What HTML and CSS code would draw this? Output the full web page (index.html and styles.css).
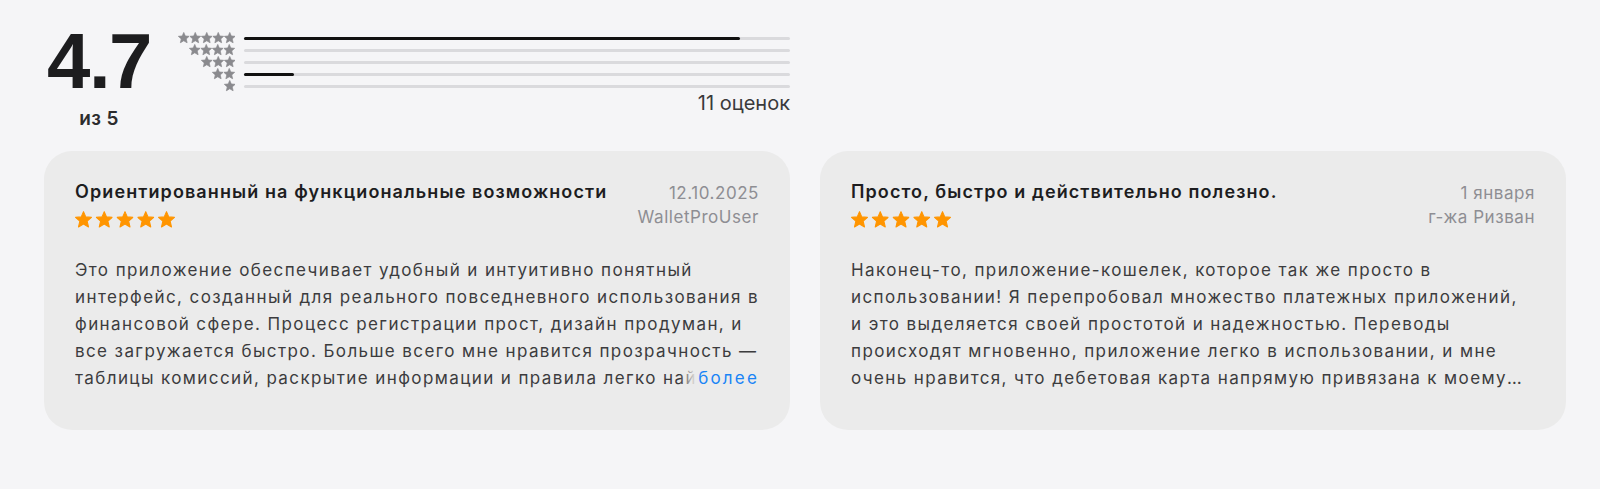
FILE: index.html
```html
<!DOCTYPE html>
<html lang="ru">
<head>
  <meta charset="UTF-8" />
  <title>Оценки и отзывы</title>
  <link rel="stylesheet" href="styles.css">
</head>
<body>
  <svg class="defs" width="0" height="0" aria-hidden="true">
    <symbol id="star" viewBox="0 0 16 16">
      <path d="M8 0.6 L10.15 5.55 L15.5 6.0 L11.45 9.6 L12.7 15.0 L8 12.2 L3.3 15.0 L4.55 9.6 L0.5 6.0 L5.85 5.55 Z" stroke-linejoin="round" stroke-width="1" />
    </symbol>
  </svg>

  <div class="summary">
    <div class="score">
      <span class="score-value">4.7</span>
      <span class="score-max">из 5</span>
    </div>

    <div class="histogram">
      <div class="hist-row">
        <svg class="hist-stars" width="57.5" height="11.5" viewBox="0 0 80 16">
          <use href="#star" x="0" width="16" height="16" /><use href="#star" x="16" width="16" height="16" /><use href="#star" x="32" width="16" height="16" /><use href="#star" x="48" width="16" height="16" /><use href="#star" x="64" width="16" height="16" />
        </svg>
        <div class="bar"><div class="bar-fill" style="width: 90.9%"></div></div>
      </div>
      <div class="hist-row">
        <svg class="hist-stars" width="46" height="11.5" viewBox="0 0 64 16">
          <use href="#star" x="0" width="16" height="16" /><use href="#star" x="16" width="16" height="16" /><use href="#star" x="32" width="16" height="16" /><use href="#star" x="48" width="16" height="16" />
        </svg>
        <div class="bar"><div class="bar-fill" style="width: 0%"></div></div>
      </div>
      <div class="hist-row">
        <svg class="hist-stars" width="34.5" height="11.5" viewBox="0 0 48 16">
          <use href="#star" x="0" width="16" height="16" /><use href="#star" x="16" width="16" height="16" /><use href="#star" x="32" width="16" height="16" />
        </svg>
        <div class="bar"><div class="bar-fill" style="width: 0%"></div></div>
      </div>
      <div class="hist-row">
        <svg class="hist-stars" width="23" height="11.5" viewBox="0 0 32 16">
          <use href="#star" x="0" width="16" height="16" /><use href="#star" x="16" width="16" height="16" />
        </svg>
        <div class="bar"><div class="bar-fill" style="width: 9.1%"></div></div>
      </div>
      <div class="hist-row">
        <svg class="hist-stars" width="11.5" height="11.5" viewBox="0 0 16 16">
          <use href="#star" x="0" width="16" height="16" />
        </svg>
        <div class="bar"><div class="bar-fill" style="width: 0%"></div></div>
      </div>
      <div class="hist-count">11 оценок</div>
    </div>
  </div>

  <div class="reviews">
    <div class="review">
      <div class="review-head">
        <div class="review-main">
          <div class="review-title">Ориентированный на функциональные возможности</div>
          <svg class="review-stars" width="100" height="17" viewBox="0 0 100 17">
            <use href="#star" x="0" width="17" height="17" /><use href="#star" x="20.75" width="17" height="17" /><use href="#star" x="41.5" width="17" height="17" /><use href="#star" x="62.25" width="17" height="17" /><use href="#star" x="83" width="17" height="17" />
          </svg>
        </div>
        <div class="review-meta">
          <div>12.10.2025</div>
          <div>WalletProUser</div>
        </div>
      </div>
      <div class="review-body">
        <p class="review-text">Это приложение обеспечивает удобный и интуитивно понятный интерфейс, созданный для реального повседневного использования в финансовой сфере. Процесс регистрации прост, дизайн продуман, и все загружается быстро. Больше всего мне нравится прозрачность — таблицы комиссий, раскрытие информации и правила легко найти и понять, поэтому я всегда знаю, за что плачу.</p>
        <a class="more" href="#">более</a>
      </div>
    </div>

    <div class="review">
      <div class="review-head">
        <div class="review-main">
          <div class="review-title">Просто, быстро и действительно полезно.</div>
          <svg class="review-stars" width="100" height="17" viewBox="0 0 100 17">
            <use href="#star" x="0" width="17" height="17" /><use href="#star" x="20.75" width="17" height="17" /><use href="#star" x="41.5" width="17" height="17" /><use href="#star" x="62.25" width="17" height="17" /><use href="#star" x="83" width="17" height="17" />
          </svg>
        </div>
        <div class="review-meta">
          <div>1 января</div>
          <div>г-жа Ризван</div>
        </div>
      </div>
      <div class="review-body">
        <p class="review-text">Наконец-то, приложение-кошелек, которое так же просто в использовании! Я перепробовал множество платежных приложений, и это выделяется своей простотой и надежностью. Переводы происходят мгновенно, приложение легко в использовании, и мне очень нравится, что дебетовая карта напрямую привязана к моему банковскому счету.</p>
      </div>
    </div>
  </div>
</body>
</html>
```

FILE: styles.css
```css
body {
  margin: 0;
  padding: 22px 34px 0 44px;
  background-color: #f5f5f7;
  font-family: Inter, "Noto Sans", sans-serif;
  color: #1d1d1f;
}

.defs {
  position: absolute;
}

.summary {
  display: flex;
  align-items: flex-start;
  width: 746px;
}

.score {
  width: 110px;
  display: flex;
  flex-direction: column;
  align-items: center;
}

.score-value {
  font-family: "Liberation Sans", Arial, sans-serif;
  font-weight: 700;
  font-size: 78px;
  line-height: 78px;
  letter-spacing: -1.5px;
}

.score-max {
  margin-top: 8px;
  font-size: 19px;
  font-weight: 600;
  line-height: 22px;
  letter-spacing: 0.3px;
  color: #2c2c2e;
}

.histogram {
  flex: 1;
  margin-left: 23px;
  margin-top: 10px;
}

.hist-row {
  display: flex;
  align-items: center;
  justify-content: flex-end;
  height: 12px;
}

.hist-stars {
  fill: #8a8a8e;
  stroke: #8a8a8e;
}

.bar {
  width: 546px;
  margin-left: 9px;
  height: 3px;
  background-color: #dadadd;
  border-radius: 2px;
}

.bar-fill {
  height: 100%;
  background-color: #111;
  border-radius: 2px;
}

.hist-count {
  text-align: right;
  font-size: 20px;
  line-height: 22px;
  color: #3a3a3c;
}

.reviews {
  display: grid;
  grid-template-columns: 1fr 1fr;
  gap: 30px;
  margin-top: 21px;
}

.review {
  background-color: #ebebeb;
  border-radius: 28px;
  padding: 30px 31px 38px;
}

.review-head {
  display: flex;
  justify-content: space-between;
  align-items: flex-start;
}

.review-title {
  font-size: 18px;
  font-weight: 600;
  line-height: 22px;
  letter-spacing: 1.1px;
}

.review-stars {
  display: block;
  margin-top: 8px;
  fill: #ff9500;
  stroke: #ff9500;
}

.review-meta {
  text-align: right;
  font-size: 17px;
  line-height: 24px;
  letter-spacing: 0.55px;
  color: #8e8e93;
}

.review-body {
  position: relative;
  margin-top: 28px;
}

.review-text {
  margin: 0;
  font-size: 17px;
  line-height: 27px;
  letter-spacing: 1.4px;
  color: #3c3c3e;
  display: -webkit-box;
  -webkit-line-clamp: 5;
  -webkit-box-orient: vertical;
  overflow: hidden;
}

.more {
  position: absolute;
  right: 0;
  bottom: 0;
  padding-left: 18px;
  font-size: 17px;
  line-height: 27px;
  letter-spacing: 2.2px;
  color: #1a84f6;
  text-decoration: none;
  background: linear-gradient(to right, rgba(235, 235, 235, 0), #ebebeb 16px);
}
```
